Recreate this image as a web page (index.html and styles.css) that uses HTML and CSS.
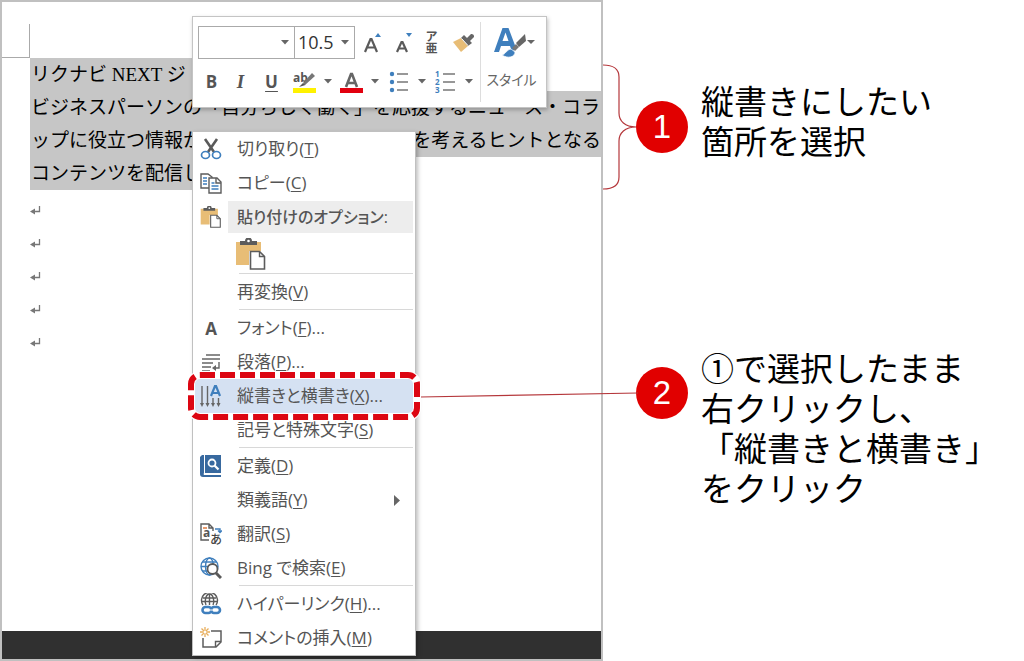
FILE: index.html
```html
<!DOCTYPE html>
<html lang="ja">
<head>
<meta charset="utf-8">
<meta name="viewport" content="width=device-width, initial-scale=1">
<title>縦書きの設定手順</title>
<link rel="stylesheet" href="styles.css">
</head>
<body>
<svg class="defs" aria-hidden="true">
  <symbol id="caret" viewBox="0 0 8 5"><path d="M0 0h8L4 4.500z" fill="#666"/></symbol>
  <symbol id="mark" viewBox="0 0 12 12"><path d="M9.500 1v5.500H3" fill="none" stroke="#777" stroke-width="1.300"/><path d="M5 3.500v6L0 6.500z" fill="#777"/></symbol>
  <symbol id="paste" viewBox="0 0 30 32">
    <path d="M0 4h25v9H13v14H0z" fill="#e8bd76"/>
    <path d="M4 7V3h5a3.500 3.500 0 0 1 7 0h5v4z" fill="#5c5c5c"/><circle cx="12.500" cy="3" r="1.300" fill="#fff"/>
    <path d="M14.500 13.500h9l5 5v12.500h-14z" fill="#fff" stroke="#5c5c5c" stroke-width="1.600"/><path d="M23.500 13.500v5h5" fill="none" stroke="#5c5c5c" stroke-width="1.400"/>
  </symbol>
</svg>
<main class="stage">
  <section class="doc" aria-label="文書">
    <div class="margin-mark"></div>
    <div class="text">
      <p class="line short"><span>リクナビ NEXT ジ</span></p>
      <p class="line"><span>ビジネスパーソンの「自分らしく働く」を応援するニュース・コラ</span></p>
      <p class="line"><span>ップに役立つ情報か</span><span>を考えるヒントとなる</span></p>
      <p class="line short"><span>コンテンツを配信し</span></p>
    </div>
    <div class="blanks">
      <svg><use href="#mark"/></svg><svg><use href="#mark"/></svg><svg><use href="#mark"/></svg><svg><use href="#mark"/></svg><svg><use href="#mark"/></svg>
    </div>
    <div class="band"></div>

    <div class="toolbar" role="toolbar" aria-label="書式">
      <div class="tools">
        <div class="tool-row">
          <label class="combo font-name"><select aria-label="フォント"><option></option></select><svg class="caret"><use href="#caret"/></svg></label>
          <label class="combo font-size"><select aria-label="サイズ"><option>10.5</option></select><svg class="caret"><use href="#caret"/></svg></label>
          <button class="tool wide grow" aria-label="拡大"><svg width="20" height="24" viewBox="0 0 20 24"><path d="M2 21 7.500 8h1L14 21M4 16.500h8" fill="none" stroke="#5a5a5a" stroke-width="2.200"/><path d="M12 6h6l-3-4z" fill="#3f7fbd"/></svg></button>
          <button class="tool wide" aria-label="縮小"><svg width="20" height="24" viewBox="0 0 20 24"><path d="M3 21 7.500 11h1L13 21M4.500 17.500h7" fill="none" stroke="#5a5a5a" stroke-width="2.200"/><path d="M12 2h6l-3 4z" fill="#3f7fbd"/></svg></button>
          <button class="tool ruby" aria-label="ルビ"><span>ア</span><span>亜</span></button>
          <button class="tool wide last" aria-label="書式のコピー"><svg width="24" height="22" viewBox="0 0 24 22"><path d="M1 10l8-4 7 8-7 6z" fill="#e8bd76"/><path d="M9 6l3-3 8 8-4 3z" fill="#666"/><path d="m14 7 5-5a2.500 2.500 0 0 1 3 3l-5 5z" fill="#666"/><path d="m9.500 6.500 6.500 7" stroke="#fff"/></svg></button>
        </div>
        <div class="tool-row lower">
          <button class="tool letter b">B</button>
          <button class="tool letter i">I</button>
          <button class="tool letter u">U</button>
          <button class="tool pen" aria-label="蛍光ペン"><svg width="23" height="24" viewBox="0 0 23 24"><text x="0" y="12" class="ab">ab</text><path d="m10 13 9-10 3 3-10 9z" fill="#777"/><path d="m10 13 2.500 2L6 17z" fill="#555"/><path d="M0 18h23v5H0z" fill="#fff200"/></svg></button>
          <button class="tool drop" aria-label="蛍光ペンの色"><svg class="caret"><use href="#caret"/></svg></button>
          <button class="tool" aria-label="文字の色"><svg width="23" height="24" viewBox="0 0 23 24"><path d="M6 17 11 4h1l5 13M8 13h7" fill="none" stroke="#666" stroke-width="2.600"/><path d="M0 18h23v5H0z" fill="#e2000f"/></svg></button>
          <button class="tool drop" aria-label="色の選択"><svg class="caret"><use href="#caret"/></svg></button>
          <button class="tool" aria-label="箇条書き"><svg width="20" height="24" viewBox="0 0 20 24"><g fill="#3f7fbd"><circle cx="3" cy="4" r="2.200"/><circle cx="3" cy="12" r="2.200"/><circle cx="3" cy="20" r="2.200"/></g><path d="M8 4h11M8 12h11M8 20h11" stroke="#777" stroke-width="1.500"/></svg></button>
          <button class="tool drop" aria-label="行頭文字"><svg class="caret"><use href="#caret"/></svg></button>
          <button class="tool" aria-label="段落番号"><svg width="22" height="24" viewBox="0 0 22 24"><g class="nums"><text x="0" y="7">1</text><text x="0" y="15">2</text><text x="0" y="23">3</text></g><path d="M8 4h12M8 12h12M8 20h12" stroke="#777" stroke-width="1.500"/></svg></button>
          <button class="tool drop" aria-label="番号書式"><svg class="caret"><use href="#caret"/></svg></button>
        </div>
      </div>
      <button class="style-button">
        <svg width="42" height="34" viewBox="0 0 42 34"><path fill-rule="evenodd" d="M0 26 8.500 2h6L22 22l-4 4-2-6H7l-2 6zM8.500 15h6L11.500 6.500z" fill="#3f7fbd"/><path d="M8 29c4-1 4-5 9-6l4 3c0 5-7 7-13 3z" fill="#3f7fbd" stroke="#fff" stroke-width=".7"/><path d="m18 22 4-4 3 3-4 4z" fill="#777"/><path d="m22 17 9-9 1 7-7 6z" fill="#666"/><path d="M33 14h8l-4 4z" fill="#666"/></svg>
        <span>スタイル</span>
      </button>
    </div>

    <div class="menu" role="menu">
      <button class="item" role="menuitem"><svg class="icon" viewBox="0 0 22 22"><path d="m5 1 9 13M17 1 8 14" stroke="#5a5a5a" stroke-width="2.600"/><g fill="none" stroke="#3f7fbd" stroke-width="1.700"><ellipse cx="5.500" cy="17" rx="4" ry="3.500"/><ellipse cx="16.500" cy="17" rx="4" ry="3.500"/></g></svg><span>切り取り(<u>T</u>)</span></button>
      <button class="item" role="menuitem"><svg class="icon" viewBox="0 0 22 22"><g fill="#fff" stroke="#5c5c5c" stroke-width="1.400"><path d="M1 2h7l4 3v11H1z"/><path d="M9 6h8l4 4v11H9z"/><path d="M16 6v5h5" fill="none"/></g><path d="M3 6h4M3 9h4M3 12h4M11.500 11h3M11.500 14h7M11.500 17h7" stroke="#3f7fbd" stroke-width="1.300"/></svg><span>コピー(<u>C</u>)</span></button>
      <div class="item heading"><svg class="icon"><use href="#paste"/></svg><strong>貼り付けのオプション:</strong></div>
      <div class="paste-row"><button aria-label="貼り付け"><svg width="30" height="32"><use href="#paste"/></svg></button></div>
      <hr>
      <button class="item" role="menuitem"><span class="icon"></span><span>再変換(<u>V</u>)</span></button>
      <hr>
      <button class="item" role="menuitem"><span class="icon font-icon">A</span><span>フォント(<u>F</u>)...</span></button>
      <button class="item" role="menuitem"><svg class="icon" viewBox="0 0 22 22"><path d="M6 4h14M2 8h18M2 12h11M2 16h9M2 20h8M19 11v6h-5" fill="none" stroke="#666" stroke-width="1.400"/><path d="M16 14v6l-4-3z" fill="#666"/></svg><span>段落(<u>P</u>)...</span></button>
      <button class="item selected" role="menuitem"><svg class="icon" viewBox="0 0 22 22"><path d="M2 1v19M7.500 1v19M13 13v7M18.500 13v7" stroke="#666" stroke-width="1.400"/><path d="M0 18h4l-2 4zM5.500 18h4l-2 4zM11 18h4l-2 4zM16.500 18h4l-2 4z" fill="#666"/><path d="m11 11 4-10h1l4 10M12.500 8h6" fill="none" stroke="#3f7fbd" stroke-width="2.200"/></svg><span>縦書きと横書き(<u>X</u>)...</span>
        <svg class="frame" viewBox="0 0 232 48"><rect x="3" y="3" width="226" height="42" rx="9" fill="none" stroke="#fff" stroke-width="8"/><rect x="3" y="3" width="226" height="42" rx="9" fill="none" stroke="#dc0612" stroke-width="6" stroke-dasharray="15 5"/></svg></button>
      <button class="item" role="menuitem"><span class="icon"></span><span>記号と特殊文字(<u>S</u>)</span></button>
      <hr>
      <button class="item" role="menuitem"><svg class="icon" viewBox="0 0 22 22"><path d="M2 0h19v18H4a1.500 1.500 0 0 0 0 2h17v2H3a3 3 0 0 1-3-3V2z" fill="#38699f"/><path d="M4.500 0v18" stroke="#fff"/><circle cx="12" cy="8" r="3.500" fill="none" stroke="#fff" stroke-width="1.800"/><path d="m14.500 10.500 4 4" stroke="#fff" stroke-width="2.300"/></svg><span>定義(<u>D</u>)</span></button>
      <button class="item" role="menuitem"><span class="icon"></span><span>類義語(<u>Y</u>)</span><svg class="sub" width="7" height="11" viewBox="0 0 7 11"><path d="M0 0v11l6-5.500z" fill="#666"/></svg></button>
      <button class="item" role="menuitem"><svg class="icon" viewBox="0 0 22 22"><path d="M9 17H1V1h8l4 4v3M9 1v4h4" fill="none" stroke="#5c5c5c" stroke-width="1.400"/><path d="M3 5h4" stroke="#e07a3c" stroke-width="1.500"/><path d="M15 6h5v3M18 7.500l2 2 2-2" fill="none" stroke="#3f7fbd" stroke-width="1.400"/><text x="3" y="14" class="tr-a">a</text><text x="10" y="21" class="tr-b">あ</text></svg><span>翻訳(<u>S</u>)</span></button>
      <button class="item" role="menuitem"><svg class="icon" viewBox="0 0 22 22"><g fill="none" stroke="#3f7fbd" stroke-width="1.400"><circle cx="9.500" cy="9.500" r="8.500"/><ellipse cx="9.500" cy="9.500" rx="4" ry="8.500"/><path d="M1 9.500h17M2.500 5h14M2.500 14h14"/></g><circle cx="12.500" cy="12" r="5" fill="#fff" stroke="#5a5a5a" stroke-width="1.800"/><path d="m16 16 5 5" stroke="#5a5a5a" stroke-width="3"/></svg><span>Bing で検索(<u>E</u>)</span></button>
      <hr>
      <button class="item" role="menuitem"><svg class="icon" viewBox="0 0 22 22"><g fill="none" stroke="#5c5c5c" stroke-width="1.400"><path d="M3 12a8 8 0 1 1 13 0"/><path d="M6 12c-2-4 0-11 3.500-11S15 8 13 12M9.500 1v11M2 8.500h15M3 5h13"/></g><g fill="none" stroke="#3f7fbd" stroke-width="2.600"><rect x="2.500" y="14" width="9" height="6" rx="3"/><rect x="11" y="14" width="9" height="6" rx="3"/></g><path d="M8 17h7" stroke="#fff" stroke-width="1"/></svg><span>ハイパーリンク(<u>H</u>)...</span></button>
      <button class="item" role="menuitem"><svg class="icon" viewBox="0 0 22 22"><path d="M11 4h10v11l-5 5H3v-9" fill="none" stroke="#5c5c5c" stroke-width="1.500"/><path d="M21 14.500h-5.500V20" fill="none" stroke="#5c5c5c" stroke-width="1.400"/><path d="M5 0v10M0 5h10M1.500 1.500l7 7M8.500 1.500l-7 7" stroke="#e8ae5c" stroke-width="1.300"/><circle cx="5" cy="5" r="1.500" fill="#fff"/></svg><span>コメントの挿入(<u>M</u>)</span></button>
    </div>
    <svg class="connector" width="218" height="6" viewBox="0 0 218 6"><path d="M0 5 218 1" stroke="#b5373b" stroke-width="1.200"/></svg>
  </section>

  <section class="notes" aria-label="手順">
    <div class="note first">
      <svg class="brace" width="33" height="126" viewBox="0 0 33 126"><path d="M0 1c10 0 16 4 16 12v36c0 8 6 14 17 14-11 0-17 6-17 14v36c0 8-6 12-16 12" fill="none" stroke="#b5373b" stroke-width="1.200"/></svg>
      <span class="badge">1</span>
      <p>縦書きにしたい<br>箇所を選択</p>
    </div>
    <div class="note second">
      <span class="badge">2</span>
      <p>①で選択したまま<br>右クリックし、<br>「縦書きと横書き」<br>をクリック</p>
    </div>
  </section>
</main>
</body>
</html>
```

FILE: styles.css
```css
* { box-sizing: border-box; }
body {
  margin: 0;
  background: #fff;
  color: #000;
  font-family: "Open Sans", "Noto Sans CJK JP", sans-serif;
}
p { margin: 0; }
button {
  margin: 0;
  padding: 0;
  border: 0;
  background: none;
  color: inherit;
  font: inherit;
}
svg { flex: none; }
.defs { display: none; }

.stage {
  display: grid;
  grid-template-columns: 603fr 421fr;
  min-height: 100vh;
}

/* Document window */
.doc {
  position: relative;
  display: flex;
  flex-direction: column;
  min-width: 0;
  border: 2px solid #c0c0c0;
}
.margin-mark {
  width: 28px;
  height: 34px;
  margin-top: 22px;
  border: solid #aaa;
  border-width: 0 1px 1px 0;
}
.text {
  padding-left: 28px;
  font: 19px/34px "Liberation Serif", "Noto Sans CJK JP", serif;
}
.line {
  display: flex;
  justify-content: space-between;
  height: 33px;
  overflow: hidden;
  background: #c6c6c6;
  white-space: nowrap;
}
.line span:first-child { padding-left: 1px; }
.short { width: 200px; }
.blanks {
  display: flex;
  flex-direction: column;
  gap: 21px;
  padding: 15px 0 0 28px;
}
.blanks svg { width: 12px; height: 12px; }
.band {
  height: 28px;
  margin-top: auto;
  background: #303030;
}

/* Floating format toolbar */
.toolbar {
  position: absolute;
  top: 14px;
  left: 190px;
  display: flex;
  width: 355px;
  height: 92px;
  padding: 5px 4px;
  border: 1px solid #c4c4c4;
  background: #fff;
  box-shadow: 1px 2px 4px rgba(0, 0, 0, .25);
  color: #555;
}
.tools {
  flex: 1;
  padding: 4px 0 0 1px;
  border-right: 1px solid #ddd;
}
.tool-row { display: flex; align-items: center; height: 33px; }
.lower { margin-top: 6px; }
.combo {
  display: grid;
  align-items: center;
  height: 33px;
  border: 1px solid #aaa;
}
.combo select, .combo svg { grid-area: 1 / 1; }
.combo select {
  width: 100%;
  height: 31px;
  padding: 0 0 2px 3px;
  border: 0;
  appearance: none;
  background: none;
  color: #333;
  font: 18px "Open Sans", sans-serif;
}
.combo svg { justify-self: end; margin-right: 5px; }
.font-name { width: 97px; }
.font-size { width: 61px; margin-left: -1px; }
.caret { width: 8px; height: 5px; }
.tool {
  display: flex;
  align-items: center;
  justify-content: center;
  width: 25px;
  height: 28px;
}
.wide { width: 31px; }
.grow { margin-left: 2px; }
.last { margin-left: 4px; }
.ruby {
  flex-direction: column;
  font-size: 12px;
  font-weight: 700;
  line-height: 12px;
}
.letter { width: 31px; font-size: 17px; font-weight: 700; }
.b { width: 27px; }
.i { font-family: "Liberation Serif", serif; font-style: italic; font-size: 19px; }
.u { text-decoration: underline; text-underline-offset: 3px; }
.pen { margin-left: 5px; }
.drop { width: 22px; }
.ab { font: 700 12px "Open Sans", sans-serif; fill: #555; }
.nums { font: 700 8px "Open Sans", sans-serif; fill: #3f7fbd; }
.style-button {
  display: flex;
  flex-direction: column;
  align-items: center;
  width: 62px;
  padding-top: 4px;
  line-height: 24px;
  color: #666;
  font-feature-settings: "palt";
}
.style-button svg { margin: 0 0 8px 6px; }
.style-button span { font-size: 14px; }

/* Context menu */
.menu {
  position: absolute;
  top: 129px;
  left: 190px;
  width: 224px;
  border: 1px solid #c0c0c0;
  background: #fff;
  box-shadow: 2px 2px 4px rgba(0, 0, 0, .25);
  color: #555;
  font-size: 17px;
  font-feature-settings: "palt";
}
.item {
  display: flex;
  align-items: center;
  gap: 15px;
  width: 100%;
  height: 34px;
  padding: 0 14px 0 7px;
  line-height: 24px;
  text-align: left;
  white-space: nowrap;
}
.icon { flex: none; width: 22px; height: 22px; }
.item u { text-underline-offset: 2px; }
.heading {
  gap: 6px;
  padding-right: 2px;
}
.heading strong {
  flex: 1;
  padding: 4px 9px;
  background: #ededed;
  font-size: 16px;
  font-weight: 500;
}
.paste-row {
  display: flex;
  align-items: center;
  height: 39px;
  padding-left: 43px;
}
.paste-row button { display: flex; }
.menu hr {
  height: 1px;
  margin: 0 2px 1px 46px;
  border: 0;
  background: #d8d8d8;
}
.font-icon {
  font-weight: 700;
  text-align: center;
}
.selected {
  position: relative;
  background: #d5e1f2;
}
.frame {
  position: absolute;
  top: -7px;
  left: -5px;
  width: 232px;
  height: 48px;
  overflow: visible;
  z-index: 1;
}
.sub { margin-left: auto; }
.tr-a { font: 700 12px "Open Sans", sans-serif; fill: #555; }
.tr-b { font: 500 12px "Noto Sans CJK JP", sans-serif; fill: #444; }

.connector {
  position: absolute;
  top: 390px;
  left: 418px;
}

/* Instructions */
.notes {
  display: flex;
  flex-direction: column;
  gap: 159px;
  padding-top: 64px;
  font-size: 33px;
  line-height: 40px;
}
.note { display: flex; white-space: nowrap; }
.first { align-items: center; }
.first p { padding-bottom: 10px; }
.second { padding-left: 33px; }
.second .badge { margin-top: 18px; }
.badge {
  flex: none;
  width: 52px;
  height: 52px;
  margin-right: 13px;
  border-radius: 50%;
  background: #e10000;
  color: #fff;
  font: 33px/52px "Liberation Sans", sans-serif;
  text-align: center;
}
```
